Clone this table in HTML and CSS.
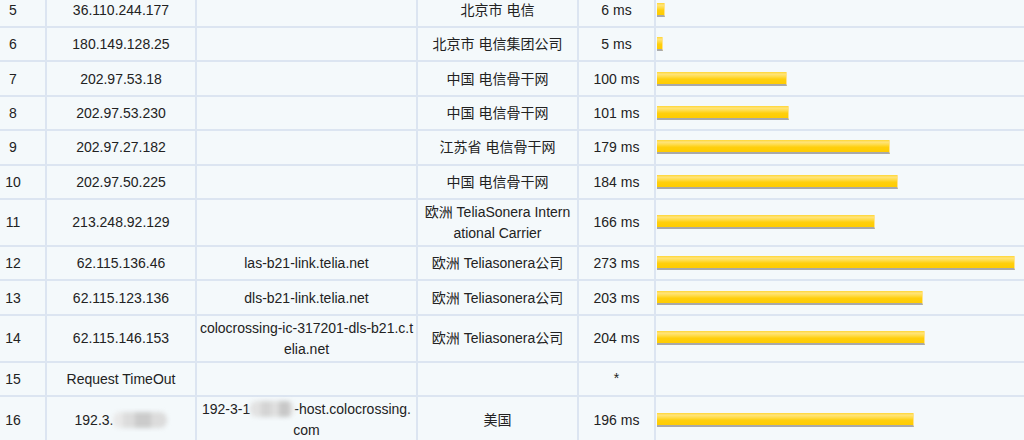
FILE: index.html
```html
<!DOCTYPE html>
<html lang="zh-CN">
<head>
<meta charset="utf-8">
<title>Traceroute</title>
<link rel="stylesheet" href="styles.css">
</head>
<body>
<div class="trace">
  <div class="row">
    <div class="c hop">5</div><div class="c ip">36.110.244.177</div><div class="c host"></div><div class="c loc">北京市 电信</div><div class="c ms">6 ms</div><div class="c graph"><span class="bar" style="width:8px"></span></div>
  </div>
  <div class="row">
    <div class="c hop">6</div><div class="c ip">180.149.128.25</div><div class="c host"></div><div class="c loc">北京市 电信集团公司</div><div class="c ms">5 ms</div><div class="c graph"><span class="bar" style="width:6px"></span></div>
  </div>
  <div class="row">
    <div class="c hop">7</div><div class="c ip">202.97.53.18</div><div class="c host"></div><div class="c loc">中国 电信骨干网</div><div class="c ms">100 ms</div><div class="c graph"><span class="bar" style="width:130px"></span></div>
  </div>
  <div class="row">
    <div class="c hop">8</div><div class="c ip">202.97.53.230</div><div class="c host"></div><div class="c loc">中国 电信骨干网</div><div class="c ms">101 ms</div><div class="c graph"><span class="bar" style="width:132px"></span></div>
  </div>
  <div class="row">
    <div class="c hop">9</div><div class="c ip">202.97.27.182</div><div class="c host"></div><div class="c loc">江苏省 电信骨干网</div><div class="c ms">179 ms</div><div class="c graph"><span class="bar" style="width:233px"></span></div>
  </div>
  <div class="row">
    <div class="c hop">10</div><div class="c ip">202.97.50.225</div><div class="c host"></div><div class="c loc">中国 电信骨干网</div><div class="c ms">184 ms</div><div class="c graph"><span class="bar" style="width:241px"></span></div>
  </div>
  <div class="row">
    <div class="c hop">11</div><div class="c ip">213.248.92.129</div><div class="c host"></div><div class="c loc"><span class="t">欧洲 TeliaSonera Intern<br>ational Carrier</span></div><div class="c ms">166 ms</div><div class="c graph"><span class="bar" style="width:218px"></span></div>
  </div>
  <div class="row">
    <div class="c hop">12</div><div class="c ip">62.115.136.46</div><div class="c host">las-b21-link.telia.net</div><div class="c loc">欧洲 Teliasonera公司</div><div class="c ms">273 ms</div><div class="c graph"><span class="bar" style="width:358px"></span></div>
  </div>
  <div class="row">
    <div class="c hop">13</div><div class="c ip">62.115.123.136</div><div class="c host">dls-b21-link.telia.net</div><div class="c loc">欧洲 Teliasonera公司</div><div class="c ms">203 ms</div><div class="c graph"><span class="bar" style="width:266px"></span></div>
  </div>
  <div class="row">
    <div class="c hop">14</div><div class="c ip">62.115.146.153</div><div class="c host"><span class="t">colocrossing-ic-317201-dls-b21.c.t<br>elia.net</span></div><div class="c loc">欧洲 Teliasonera公司</div><div class="c ms">204 ms</div><div class="c graph"><span class="bar" style="width:268px"></span></div>
  </div>
  <div class="row">
    <div class="c hop">15</div><div class="c ip">Request TimeOut</div><div class="c host"></div><div class="c loc"></div><div class="c ms star">*</div><div class="c graph"></div>
  </div>
  <div class="row">
    <div class="c hop">16</div><div class="c ip"><span class="t">192.3.<span class="blur blur-ip"></span></span></div><div class="c host"><span class="t">192-3-1<span class="blur blur-host"></span>-host.colocrossing.<br>com</span></div><div class="c loc">美国</div><div class="c ms">196 ms</div><div class="c graph"><span class="bar" style="width:257px"></span></div>
  </div>
</div>
</body>
</html>
```

FILE: styles.css
```css
html, body {
  margin: 0;
  padding: 0;
  background: #f4f9fb;
  overflow: hidden;
}

body {
  font-family: "Liberation Sans", "Noto Sans CJK SC", sans-serif;
  font-size: 14px;
  color: #222222;
}

.trace {
  width: 1043px;
  margin-left: -19px;
  margin-top: -6.4px;
}

.row {
  display: grid;
  grid-template-columns: 66px 150px 221px 161px 77px 368px;
  min-height: 34.4px;
}

.c {
  box-sizing: border-box;
  display: flex;
  align-items: center;
  justify-content: center;
  text-align: center;
  padding: 2px 3px 1px;
  line-height: 21px;
  white-space: nowrap;
  border-right: 2px solid #dce5f1;
  border-bottom: 2px solid #dce5f1;
}

.c.graph {
  justify-content: flex-start;
  padding-left: 1px;
  padding-top: 1px;
  border-right: none;
}

.t {
  display: inline-block;
}

.star {
  padding-bottom: 3px;
}

.bar {
  display: block;
  box-sizing: border-box;
  height: 14px;
  background: linear-gradient(#ffd633 0, #ffe47a 18%, #ffdc4a 38%, #ffcf0d 60%, #ffcc00 100%);
  border-bottom: 2px solid #a9a9a9;
  border-right: 1px solid #ffe38c;
}

.blur {
  display: inline-block;
  height: 16px;
  vertical-align: -3px;
  border-radius: 7px;
  filter: blur(2.2px);
}

.blur-ip {
  width: 54px;
  background: linear-gradient(90deg, #e9e9e9 0 18%, #dcdcdc 18% 40%, #cbcbcb 40% 70%, #dcdcdc 70% 100%);
}

.blur-host {
  width: 44px;
  background: linear-gradient(90deg, #e2e2e2 0 25%, #d4d4d4 25% 48%, #dfdfdf 48% 65%, #c8c8c8 65% 90%, #e6e6e6 90% 100%);
}
```
